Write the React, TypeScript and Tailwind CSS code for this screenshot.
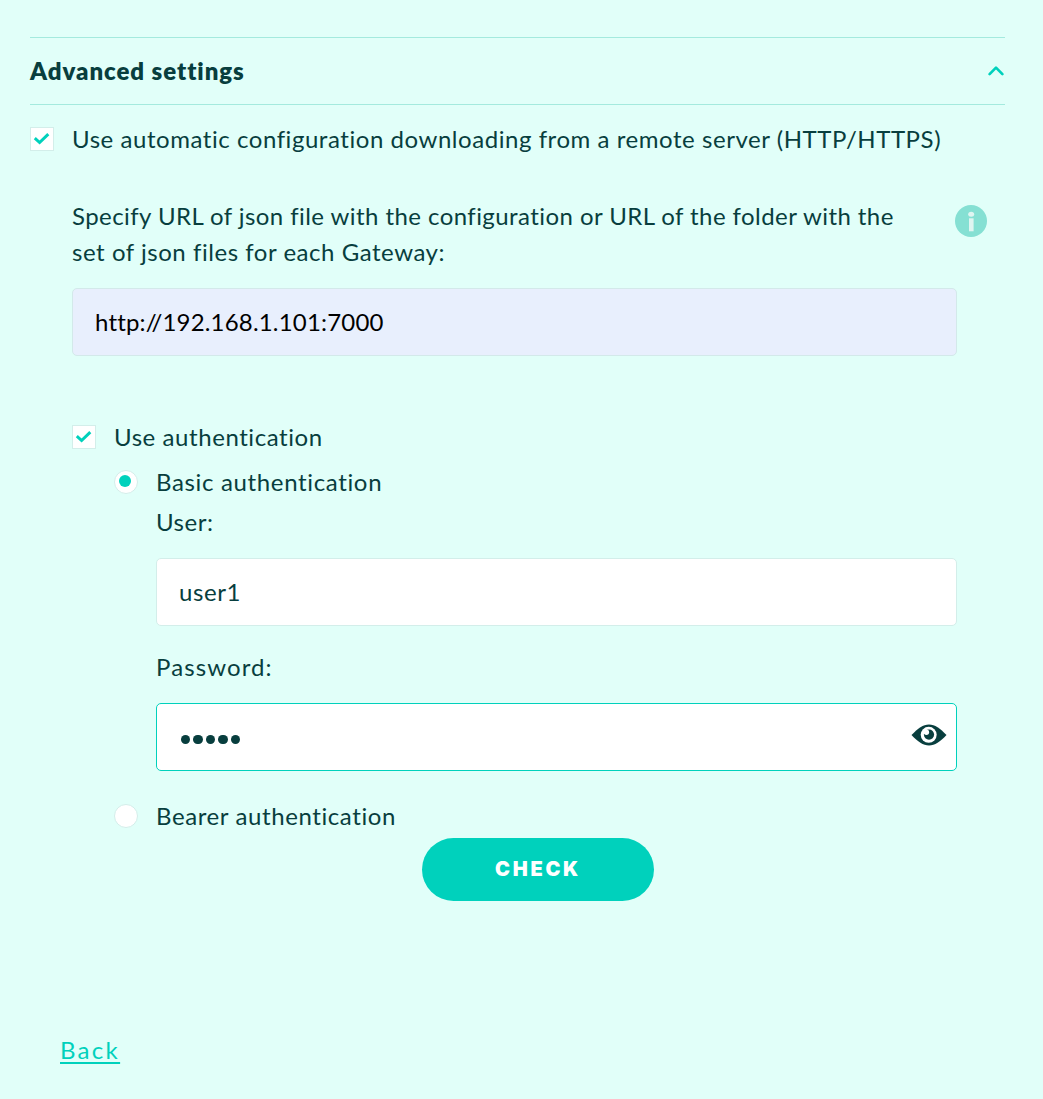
import { useState } from 'react';

function CheckBox() {
  return (
    <span className="flex h-6 w-6 shrink-0 items-center justify-center border border-[#d3eeea] bg-white">
      <svg width="22" height="22" viewBox="0 0 22 22" fill="none" stroke="#00d1bc" strokeWidth="3">
        <path d="M3.8 10.2 L8.6 14.5 L17.3 6.2" strokeLinejoin="miter" />
      </svg>
    </span>
  );
}

function Radio({ checked = false }: { checked?: boolean }) {
  return (
    <span className="h-6 w-6 shrink-0 rounded-full border border-[#d3eeea] bg-white pl-[4px] pt-[4px]">
      {checked && <span className="block h-3 w-3 rounded-full bg-[#00d1bc]" />}
    </span>
  );
}

function Eye() {
  return (
    <svg width="36" height="22" viewBox="0 0 36 22" className="shrink-0">
      <path d="M0.5 11 C7 4 12 0.4 18 0.4 C24 0.4 29 4 35.5 11 C29 18 24 21.4 18 21.4 C12 21.4 7 18 0.5 11 Z" fill="#083e3e" />
      <circle cx="17.7" cy="10.8" r="8" fill="white" />
      <circle cx="18" cy="10.6" r="5.1" fill="#083e3e" />
      <circle cx="15.4" cy="8.3" r="2.7" fill="white" />
    </svg>
  );
}

export default function App() {
  const [url, setUrl] = useState('http://192.168.1.101:7000');
  const [user, setUser] = useState('user1');
  return (
    <div className="h-[1099px] w-full bg-[#e1fff9] pl-[30px] pr-[38px] pt-[37px] font-['Lato',sans-serif] text-2xl leading-9 text-[#083e3e]">
      <div className="flex h-[68px] items-center justify-between border-y border-[#a4eade]">
        <h1 className="font-extrabold tracking-[0.95px]">Advanced settings</h1>
        <svg width="18" height="12" viewBox="0 0 18 12" fill="none" stroke="#00d1bc" strokeWidth="2.7" strokeLinecap="round" strokeLinejoin="round">
          <path d="M2.6 9.1 L9 2.6 L15.4 9.1" />
        </svg>
      </div>

      <div className="mt-4 flex gap-[18px]">
        <div className="pt-[6px]"><CheckBox /></div>
        <p className="whitespace-nowrap tracking-[0.55px]">Use automatic configuration downloading from a remote server (HTTP/HTTPS)</p>
      </div>

      <div className="ml-[42px] mt-[41px] w-[885px]">
        <div className="flex h-[72px]">
          <p className="w-[883px] shrink-0 whitespace-nowrap">
            <span className="tracking-[0.43px]">Specify URL of json file with the configuration or URL of the folder with the</span>
            <br />
            <span className="tracking-[0.54px]">set of json files for each Gateway:</span>
          </p>
          <svg width="32" height="32" viewBox="0 0 32 32" className="mt-[7px] shrink-0">
            <circle cx="16" cy="16" r="16" fill="#85e0d3" />
            <ellipse cx="16.2" cy="9.2" rx="3" ry="2.5" fill="#dff5f1" />
            <rect x="14" y="13.3" width="4.6" height="13" fill="#dff5f1" />
          </svg>
        </div>
        <input aria-label="URL" value={url} onChange={(e) => setUrl(e.target.value)} className="mt-[18px] block h-[68px] w-full rounded-[5px] border border-[#d3e9ea] bg-[#e8effd] px-[22px] pb-0.5 tracking-[0.18px] text-black outline-none" />

        <div className="mt-[63px] flex gap-[18px]">
          <div className="pt-[6px]"><CheckBox /></div>
          <p className="tracking-[0.57px]">Use authentication</p>
        </div>

        <div className="ml-[42px] mt-[9px]">
          <div className="flex gap-[18px]">
            <div className="flex pt-[6px]"><Radio checked /></div>
            <p className="tracking-[0.65px]">Basic authentication</p>
          </div>
          <div className="ml-[42px]">
            <p className="mt-1 tracking-[0.5px]">User:</p>
            <input aria-label="User" value={user} onChange={(e) => setUser(e.target.value)} className="mt-[18px] block h-[68px] w-full rounded-[5px] border border-[#d3eeea] bg-white px-[22px] pb-0.5 tracking-[0.6px] outline-none" />
            <p className="mt-[23px] tracking-[1.1px]">Password:</p>
            <div className="mt-[18px] flex h-[68px] items-center justify-between rounded-[5px] border border-[#00d1bc] bg-white pl-[23.5px] pr-[9px]">
              <div className="flex gap-[3px] pt-[5px]" aria-label="Password">
                <span className="h-[9.6px] w-[9.6px] rounded-full bg-[#083e3e]" />
                <span className="h-[9.6px] w-[9.6px] rounded-full bg-[#083e3e]" />
                <span className="h-[9.6px] w-[9.6px] rounded-full bg-[#083e3e]" />
                <span className="h-[9.6px] w-[9.6px] rounded-full bg-[#083e3e]" />
                <span className="h-[9.6px] w-[9.6px] rounded-full bg-[#083e3e]" />
              </div>
              <div className="pb-[5px]"><Eye /></div>
            </div>
          </div>
          <div className="mt-[27px] flex gap-[18px]">
            <div className="flex pt-[6px]"><Radio /></div>
            <p className="tracking-[0.6px]">Bearer authentication</p>
          </div>
        </div>
      </div>

      <button className="ml-[392px] mt-1 flex h-[63px] w-[232px] items-center justify-center rounded-full bg-[#00d1bc] pb-px font-['Inter',sans-serif] text-xl font-black tracking-[2.7px] text-white">
        CHECK
      </button>

      <a href="#" className="ml-[30px] mt-[131px] block w-fit tracking-[2.3px] text-[#00d1bc] underline decoration-2 underline-offset-[3px]">Back</a>
    </div>
  );
}
